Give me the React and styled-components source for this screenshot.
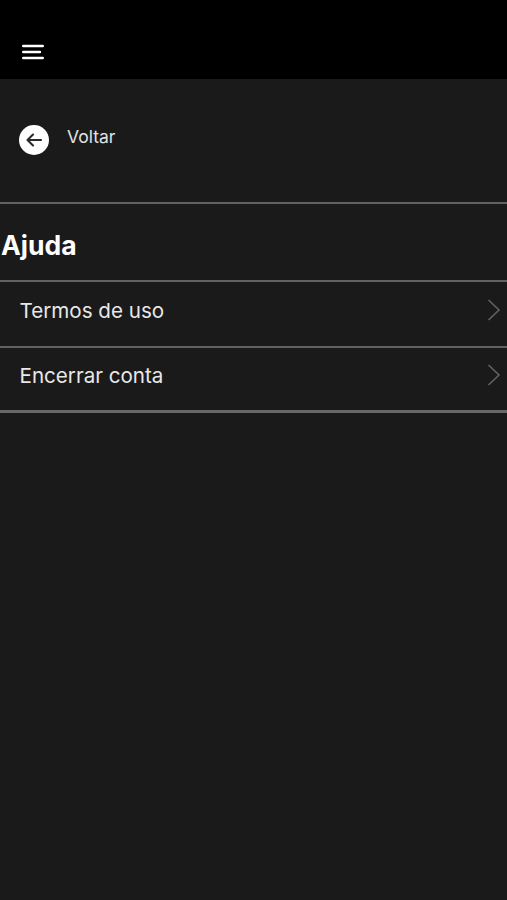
import React from "react";
import styled, { createGlobalStyle } from "styled-components";

const Global = createGlobalStyle`
  html, body { margin: 0; padding: 0; background: #1a1a1a; }
  body { font-family: "Inter", "Liberation Sans", sans-serif; }
`;
const Page = styled.div`
  width: 507px;
  height: 900px;
  background: #1a1a1a;
  overflow: hidden;
`;
const TopBar = styled.header`
  height: 79px;
  background: #000;
  display: flex;
  align-items: flex-start;
  padding: 44px 0 0 22px;
  box-sizing: border-box;
`;
const MenuIcon = styled.svg`
  display: block;
  width: 22px;
  height: 16px;
`;
const BackRow = styled.div`
  height: 123px;
  box-sizing: border-box;
  padding: 46px 0 0 19px;
  display: flex;
  align-items: flex-start;
  gap: 18px;
`;
const BackCircle = styled.div`
  width: 30px;
  height: 30px;
  border-radius: 50%;
  background: #fff;
  display: flex;
  align-items: center;
  justify-content: center;
`;
const BackLabel = styled.span`
  color: #e2e2e2;
  font-size: 17.5px;
  line-height: 22px;
  margin-top: 1px;
`;
const Title = styled.h1`
  margin: 0;
  height: 78px;
  box-sizing: border-box;
  border-top: 2px solid #626262;
  padding-left: 1px;
  color: #fff;
  font-size: 26.5px;
  font-weight: 700;
  line-height: 82px;
`;
const Item = styled.div`
  height: ${p => p.$h}px;
  box-sizing: border-box;
  border-top: 2px solid #626262;
  display: flex;
  align-items: center;
  justify-content: space-between;
  padding: 0 6px 6px 19.5px;
`;
const ItemLabel = styled.span`
  color: #e8e8e8;
  font-size: 20.6px;
  line-height: 26px;
`;
const Chevron = styled.svg`
  display: block;
  width: 14px;
  height: 22px;
  margin-bottom: 3px;
`;
const EndRule = styled.div`
  height: 3px;
  background: #686868;
`;

const Arrow = () => (
  <svg width="16" height="14" viewBox="0 0 16 14" fill="none" stroke="#2a2a2a" strokeWidth="2.1" strokeLinecap="round" strokeLinejoin="round">
    <path d="M15 7H1.5M7 1.5 1.5 7 7 12.5" />
  </svg>
);
const Chev = () => (
  <Chevron viewBox="0 0 14 22" fill="none" stroke="#626262" strokeWidth="1.6">
    <path d="M1.5 1 12 11 1.5 21" />
  </Chevron>
);

export default function App() {
  return (
    <Page>
      <Global />
      <TopBar>
        <MenuIcon viewBox="0 0 22 16" fill="none" stroke="#fff" strokeWidth="2.4" strokeLinecap="round">
          <path d="M1.2 2h19.6M1.2 8h16.8M1.2 14h19.6" />
        </MenuIcon>
      </TopBar>
      <BackRow>
        <BackCircle><Arrow /></BackCircle>
        <BackLabel>Voltar</BackLabel>
      </BackRow>
      <Title>Ajuda</Title>
      <Item $h={66}><ItemLabel>Termos de uso</ItemLabel><Chev /></Item>
      <Item $h={64}><ItemLabel>Encerrar conta</ItemLabel><Chev /></Item>
      <EndRule />
    </Page>
  );
}
